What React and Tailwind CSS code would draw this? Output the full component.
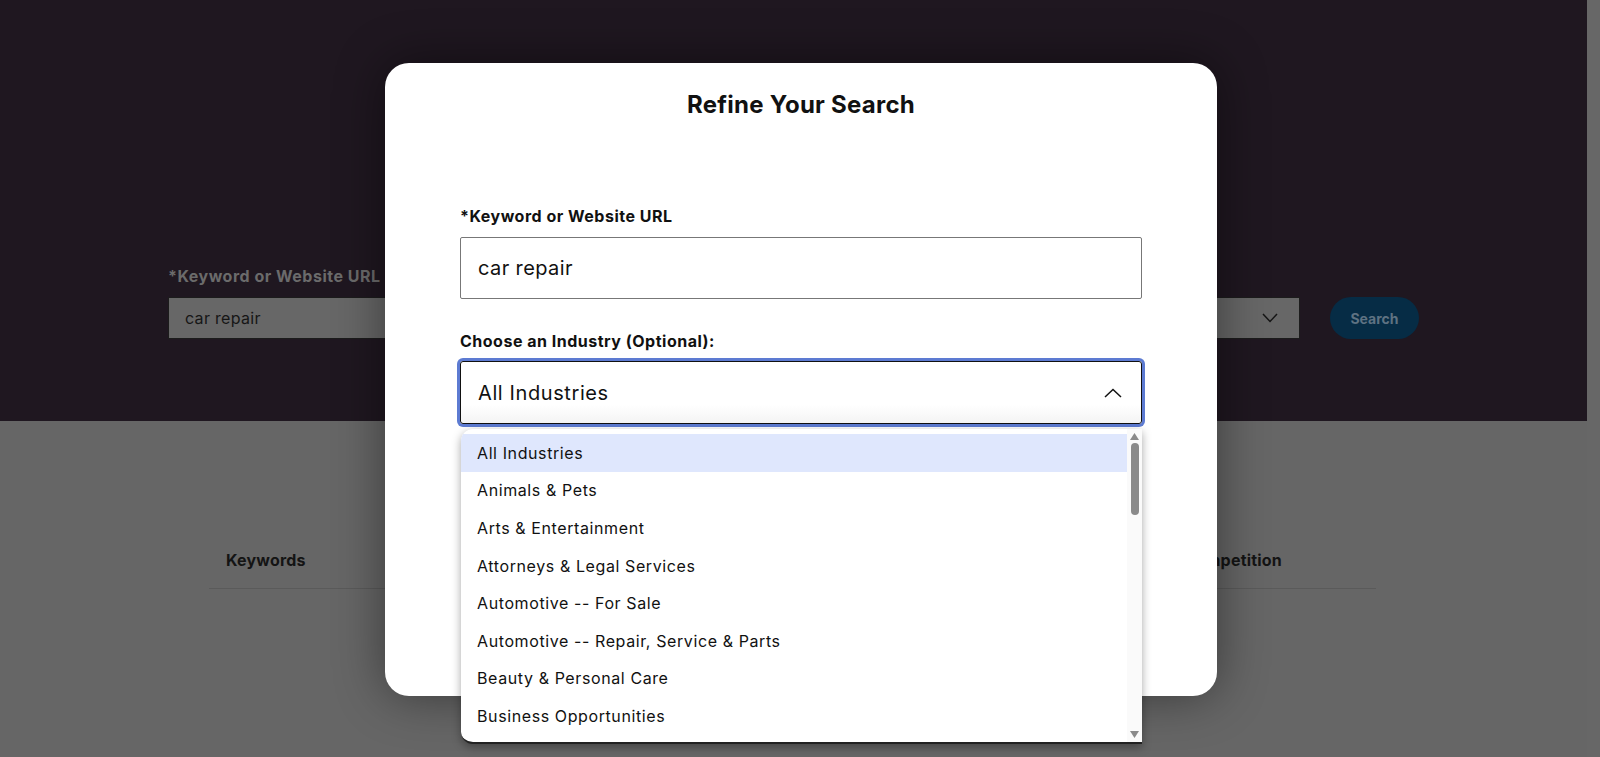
import React from "react";

const items = [
  "All Industries",
  "Animals & Pets",
  "Arts & Entertainment",
  "Attorneys & Legal Services",
  "Automotive -- For Sale",
  "Automotive -- Repair, Service & Parts",
  "Beauty & Personal Care",
  "Business Opportunities",
];

export default function App() {
  return (
    <div
      className="relative w-[1600px] h-[757px] overflow-hidden bg-[#666666] text-[#111]"
      style={{ fontFamily: "Inter, 'Noto Sans', sans-serif" }}
    >
      {/* Hero (dimmed) */}
      <div className="w-[1587px] h-[421px] bg-[#1f1720] pt-[266px] pl-[168px]">
        <div className="text-[16px] leading-[20px] font-bold tracking-[0.5px] text-[#6b6b6b]">*Keyword or Website URL</div>
        <div className="mt-[11px] flex items-center">
          <div className="w-[540px] h-[42px] bg-[#676767] border border-[#1c1c1c] flex items-center pl-[16px] text-[16px] tracking-[0.3px] text-[#161616]">
            car repair
          </div>
          <div className="ml-[20px] w-[572px] h-[42px] bg-[#676767] border border-[#1c1c1c] flex items-center justify-end pr-[21px]">
            <svg width="16" height="10" viewBox="0 0 16 10" fill="none" stroke="#151515" strokeWidth="1.5">
              <polyline points="1,1 8,8.5 15,1" />
            </svg>
          </div>
          <div className="ml-[30px] w-[89px] h-[42px] rounded-full bg-[#062c45] flex items-center justify-center text-[14px] font-bold text-[#5e7282]">
            Search
          </div>
        </div>
      </div>

      {/* Table header (dimmed) */}
      <div className="ml-[209px] w-[1167px] mt-[129px] border-b border-[#5a5a5a] h-[39px] flex items-start justify-between pl-[17px] pr-[94px]">
        <span className="text-[16px] font-bold text-[#141414] leading-[20px] tracking-[0.2px]">Keywords</span>
        <span className="text-[16px] font-bold text-[#141414] leading-[20px] tracking-[0.2px]">Competition</span>
      </div>

      {/* Modal */}
      <div className="absolute left-[385px] top-[63px] w-[832px] h-[633px] rounded-[24px] bg-white shadow-[0_0_50px_rgba(0,0,0,0.45)] px-[75px]">
        <h2 className="pt-[28px] text-center text-[24px] leading-[28px] font-bold tracking-[0.25px] text-[#111]">Refine Your Search</h2>

        <label className="block mt-[87px] text-[16px] leading-[20px] font-bold tracking-[0.5px] text-[#111]">*Keyword or Website URL</label>
        <div className="mt-[11px] h-[62px] border border-[#777] rounded-[2px] flex items-center pl-[17px] text-[20px] tracking-[0.4px] text-[#111]">
          car repair
        </div>

        <label className="block mt-[32px] text-[16px] leading-[20px] font-bold tracking-[0.5px] text-[#111]">Choose an Industry (Optional):</label>
        <div className="relative mt-[10px]">
          <div className="h-[63px] border border-[#111] rounded-[3px] ring-[3px] ring-[#5d7bd2] bg-gradient-to-b from-white from-70% to-[#f4f4f4] flex items-center justify-between pl-[17px] pr-[19px] text-[20px] tracking-[0.6px] text-[#111]">
            <span>All Industries</span>
            <svg width="18" height="10" viewBox="0 0 18 10" fill="none" stroke="#111" strokeWidth="1.5">
              <polyline points="1,9 9,1.5 17,9" />
            </svg>
          </div>

          {/* Dropdown list */}
          <div className="absolute left-[1px] top-[68px] w-[681px] h-[315px] bg-white rounded-l-[12px] border-b-2 border-[#222] shadow-[0_3px_10px_rgba(0,0,0,0.35)] flex overflow-hidden z-10">
            <div className="flex-1 pt-[5px] overflow-hidden">
              {items.map((it, i) => (
                <div
                  key={it}
                  className={`h-[37.6px] flex items-center pl-[16px] text-[16px] tracking-[0.6px] text-[#111] ${i === 0 ? "bg-[#dfe7fd]" : ""}`}
                >
                  {it}
                </div>
              ))}
            </div>
            <div className="w-[15px] bg-[#fafafa] flex flex-col items-center pt-[4px] pb-[4px]">
              <svg width="9" height="7" viewBox="0 0 9 7" fill="#8a8a8a">
                <polygon points="4.5,0 9,7 0,7" />
              </svg>
              <div className="mt-[3px] w-[8px] h-[72px] rounded-full bg-[#8a8a8a]" />
              <div className="flex-1" />
              <svg width="9" height="7" viewBox="0 0 9 7" fill="#8a8a8a">
                <polygon points="0,0 9,0 4.5,7" />
              </svg>
            </div>
          </div>
        </div>
      </div>

      {/* right strip */}
      <div className="absolute top-0 right-0 w-[13px] h-full bg-[#676767]" />
    </div>
  );
}
